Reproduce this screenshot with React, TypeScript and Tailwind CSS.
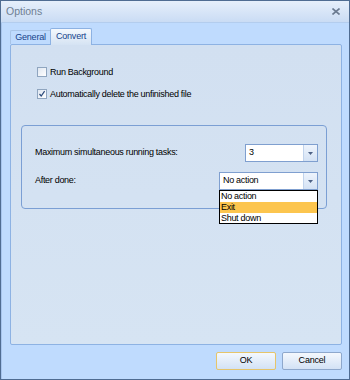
import { useState } from 'react'

const font = { fontFamily: '"Liberation Sans", Arial, sans-serif' }

function Checkbox({ checked, label }: { checked: boolean; label: string }) {
  return (
    <label className="flex items-center gap-[3px] h-[12px] text-[9px] tracking-[-0.3px] text-black leading-none">
      <span className="w-[10px] h-[10px] border border-[#8fa5bf] bg-gradient-to-br from-[#dfe7f1] to-[#ffffff] flex items-center justify-center">
        {checked && (
          <svg width="8" height="8" viewBox="0 0 8 8">
            <path d="M1.5 4 L3.2 6 L6.6 1.2" fill="none" stroke="#2b4a7a" strokeWidth="1.2" />
          </svg>
        )}
      </span>
      {label}
    </label>
  )
}

function Combo({ value, width, open }: { value: string; width: string; open?: boolean }) {
  return (
    <div className={`${width} h-[18px] border border-[#7f9fcf] bg-white flex items-stretch relative`}>
      <span className="flex-1 flex items-center pl-[3px] text-[9px] tracking-[-0.3px] text-black">{value}</span>
      <span className="w-[14px] bg-gradient-to-b from-[#eef4fc] to-[#d4e2f4] border-l border-[#c2d4ec] flex items-center justify-center">
        <svg width="5" height="3" viewBox="0 0 5 3">
          <path d="M0 0 H5 L2.5 3 Z" fill="#4d6185" />
        </svg>
      </span>
      {open && (
        <div className="absolute left-[-1px] top-[17px] w-[99px] border border-black bg-white z-10 text-[9px] tracking-[-0.3px] text-black leading-none">
          <div className="h-[11px] flex items-center pl-[1px]">No action</div>
          <div className="h-[11px] flex items-center pl-[1px] bg-[#fcc54e]">Exit</div>
          <div className="h-[10px] flex items-center pl-[1px]">Shut down</div>
        </div>
      )}
    </div>
  )
}

export default function App() {
  const [tab] = useState('Convert')
  return (
    <div style={font} className="w-[350px] h-[380px] border border-[#4f6c92] bg-[#bfdbfe] flex flex-col overflow-hidden select-none">
      {/* Title bar */}
      <div className="h-[22px] shrink-0 bg-gradient-to-b from-[#e6effb] to-[#cadcf4] border-b border-[#b3cdee] flex items-center justify-between pl-[5px] pr-[9px]">
        <span className="text-[10.5px] text-[#6f7f93]">Options</span>
        <svg width="8" height="7" viewBox="0 0 8 7">
          <path d="M0.5 0.5 L7.5 6.5 M7.5 0.5 L0.5 6.5" stroke="#6a7a90" strokeWidth="1.6" />
        </svg>
      </div>

      {/* Body */}
      <div className="flex-1 flex flex-col pl-[8px] pr-[7px] pt-[5px] border-l border-[#a7c5ee]">
        {/* Tabs */}
        <div className="h-[16px] flex items-end relative z-10">
          <div className="w-[40px] h-[14px] flex items-center justify-center text-[9px] tracking-[-0.2px] text-[#15428b] border-t border-l border-[#a9c4e6] rounded-tl-[2px]">
            General
          </div>
          <div className="w-[42px] h-[17px] -mb-px flex items-center justify-center text-[9px] tracking-[-0.2px] text-[#15428b] bg-gradient-to-b from-[#f4f8fd] to-[#d5e3f3] border border-b-0 border-[#8db2e3] rounded-t-[2px]">
            {tab}
          </div>
        </div>

        {/* Tab panel */}
        <div className="h-[301px] border border-[#8db2e3] bg-gradient-to-b from-[#d2e0f1] to-[#d6e4f3] rounded-[2px] pl-[26px] pt-[21px] pr-[14px] flex flex-col">
          <div className="flex flex-col gap-[10px]">
            <Checkbox checked={false} label="Run Background" />
            <Checkbox checked={true} label="Automatically delete the unfinished file" />
          </div>

          {/* Group box */}
          <div className="ml-[-16px] mt-[25px] h-[84px] border border-[#7b9fd4] rounded-[4px] pl-[13px] pr-[8px] pt-[18px] flex flex-col gap-[10px]">
            <div className="flex items-center justify-between">
              <span className="text-[9px] tracking-[-0.3px] text-black">Maximum simultaneous running tasks:</span>
              <Combo value="3" width="w-[73px]" />
            </div>
            <div className="flex items-center justify-between">
              <span className="text-[9px] tracking-[-0.3px] text-black">After done:</span>
              <Combo value="No action" width="w-[99px]" open />
            </div>
          </div>
        </div>

        {/* Buttons */}
        <div className="flex justify-end gap-[6px] mt-[7px]">
          <button className="w-[60px] h-[18px] text-[9px] tracking-[-0.2px] text-black border border-[#e6c56a] rounded-[2px] bg-gradient-to-b from-[#f4f8fd] to-[#d3e2f5]">
            OK
          </button>
          <button className="w-[60px] h-[18px] text-[9px] tracking-[-0.2px] text-black border border-[#8ea8cc] rounded-[2px] bg-gradient-to-b from-[#f4f8fd] to-[#d3e2f5]">
            Cancel
          </button>
        </div>
      </div>
    </div>
  )
}
